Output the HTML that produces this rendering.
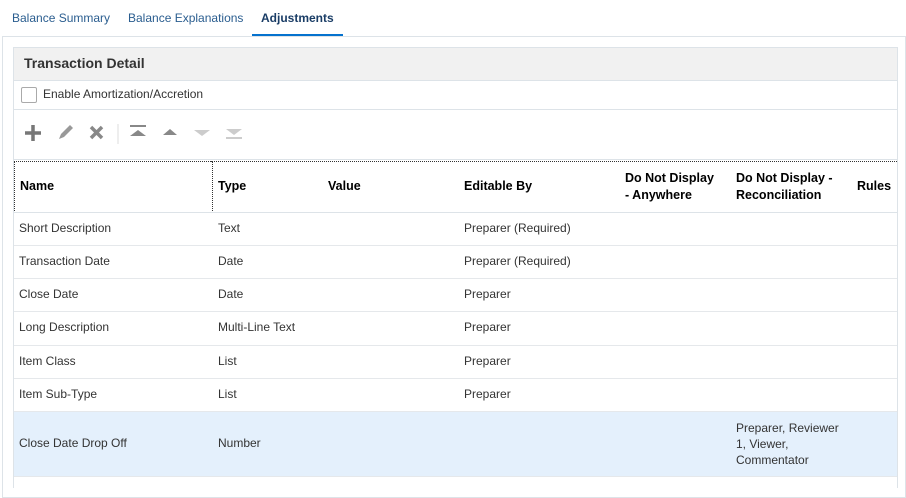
<!DOCTYPE html><html><head><style>
body{margin:0;width:906px;height:483px;overflow:hidden;background:#fff;font-family:"Liberation Sans",sans-serif;font-size:12px;color:#333;position:relative}
.a{position:absolute}
.tab{position:absolute;top:11px;font-size:12px;color:#2a5d8f}
.hd{font-weight:bold;color:#000;font-size:12.5px}
.row{position:absolute;left:14px;width:883px;border-bottom:1px solid #e5e8eb}
.row span{position:absolute}
</style></head><body>
<div class="tab" style="left:12px">Balance Summary</div>
<div class="tab" style="left:128px">Balance Explanations</div>
<div class="tab" style="left:261px;font-weight:bold;color:#1a3d66">Adjustments</div>
<div class="a" style="left:252px;top:34px;width:91px;height:3px;background:#0572ce"></div>
<div class="a" style="left:2px;top:36px;width:902px;height:460px;border:1px solid #dde3e8"></div>
<div class="a" style="left:13px;top:47px;width:883px;height:440px;border:1px solid #dde3e8;border-bottom:none"></div>
<div class="a" style="left:14px;top:48px;width:883px;height:32px;background:#f1f1f1;border-bottom:1px solid #dde3e8"></div>
<div class="a" style="left:24px;top:55px;font-size:14px;font-weight:bold;color:#333">Transaction Detail</div>
<div class="a" style="left:21px;top:87px;width:14px;height:14px;border:1px solid #aaa;border-radius:2px;background:#fff"></div>
<div class="a" style="left:43px;top:87px;font-size:12px">Enable Amortization/Accretion</div>
<div class="a" style="left:14px;top:109px;width:883px;border-top:1px solid #dde3e8"></div>
<svg class="a" style="left:20px;top:120px" width="230" height="26">
<path d="M13 5v16M5 13h16" stroke="#777" stroke-width="3.5"/>
<path d="M39 19l2-5 9-9 3 3-9 9z" fill="#999"/>
<path d="M71 7l11 11M82 7l-11 11" stroke="#888" stroke-width="3.5"/>
<path d="M98 4v20" stroke="#ddd"/>
<path d="M110 6h16" stroke="#888" stroke-width="2"/><path d="M110 16l8-6 8 6z" fill="#888"/>
<path d="M143 15l7-6 7 6z" fill="#888"/>
<path d="M174 10l8 6 8-6z" fill="#ccc"/>
<path d="M206 9l8 6 8-6z" fill="#ccc"/><path d="M206 18h16" stroke="#ccc" stroke-width="2"/>
</svg>
<div class="a" style="left:14px;top:159px;width:883px;border-top:1px solid #dde3e8"></div>
<div class="a" style="left:14px;top:161px;width:197px;height:50px;border:1px dotted #333"></div>
<div class="a" style="left:211px;top:161px;width:686px;border-top:1px dotted #333"></div>
<div class="a hd" style="left:20px;top:179px">Name</div>
<div class="a hd" style="left:218px;top:179px">Type</div>
<div class="a hd" style="left:328px;top:179px">Value</div>
<div class="a hd" style="left:464px;top:179px">Editable By</div>
<div class="a hd" style="left:625px;top:170px;line-height:17px">Do Not Display<br>- Anywhere</div>
<div class="a hd" style="left:736px;top:170px;line-height:17px">Do Not Display -<br>Reconciliation</div>
<div class="a hd" style="left:857px;top:179px">Rules</div>
<div class="a" style="left:14px;top:212px;width:883px;border-top:1px solid #dde3e8"></div>
<div class="row" style="top:213px;height:32px"><span style="left:5px;top:8px">Short Description</span><span style="left:204px;top:8px">Text</span><span style="left:450px;top:8px">Preparer (Required)</span></div>
<div class="row" style="top:246px;height:32px"><span style="left:5px;top:8px">Transaction Date</span><span style="left:204px;top:8px">Date</span><span style="left:450px;top:8px">Preparer (Required)</span></div>
<div class="row" style="top:279px;height:32px"><span style="left:5px;top:8px">Close Date</span><span style="left:204px;top:8px">Date</span><span style="left:450px;top:8px">Preparer</span></div>
<div class="row" style="top:312px;height:33px"><span style="left:5px;top:8px">Long Description</span><span style="left:204px;top:8px">Multi-Line Text</span><span style="left:450px;top:8px">Preparer</span></div>
<div class="row" style="top:346px;height:32px"><span style="left:5px;top:8px">Item Class</span><span style="left:204px;top:8px">List</span><span style="left:450px;top:8px">Preparer</span></div>
<div class="row" style="top:379px;height:32px"><span style="left:5px;top:8px">Item Sub-Type</span><span style="left:204px;top:8px">List</span><span style="left:450px;top:8px">Preparer</span></div>
<div class="row" style="top:412px;height:64px;background:#e4f0fc"><span style="left:5px;top:24px">Close Date Drop Off</span><span style="left:204px;top:24px">Number</span><span style="left:722px;top:8px;line-height:16px">Preparer, Reviewer<br>1, Viewer,<br>Commentator</span></div>
</body></html>
